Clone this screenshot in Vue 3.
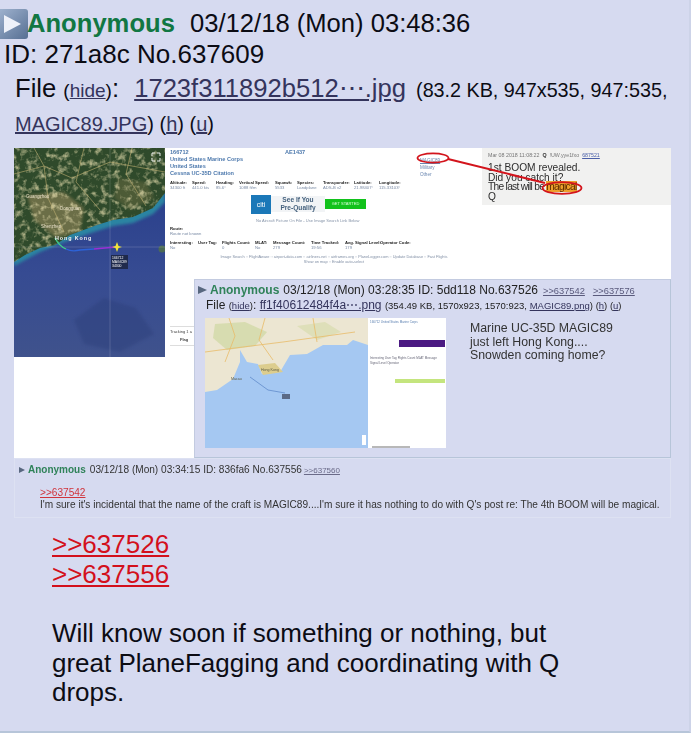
<template>
  <main class="post">
    <div class="line head">
      <svg class="expand" width="28" height="30" viewBox="0 0 28 30">
        <defs>
          <linearGradient id="btn" x1="0" y1="0" x2="1" y2="1">
            <stop offset="0" stop-color="#a3b6d2" />
            <stop offset="1" stop-color="#566f93" />
          </linearGradient>
        </defs>
        <rect x="-5" y="0" width="33" height="30" rx="3" fill="url(#btn)" />
        <path d="M4 6 L21 15 L4 24 Z" fill="#eef1f9" />
      </svg>
      <span class="name">Anonymous</span>
      <span>03/12/18 (Mon) 03:48:36</span>
    </div>
    <div class="line idline">ID: 271a8c No.637609</div>
    <div class="line fileline">
      File <small>(<a>hide</a>)</small>: <a class="fname">1723f311892b512⋯.jpg</a> <small class="meta">(83.2 KB, 947x535, 947:535,</small>
    </div>
    <div class="line magic"><a>MAGIC89.JPG</a>) (<a>h</a>) (<a>u</a>)</div>

    <div class="shot">
      <div class="shot-top">
        <svg class="map" width="151" height="209" viewBox="0 0 151 209">
          <defs>
            <linearGradient id="sea" x1="0" y1="0" x2="0" y2="1">
              <stop offset="0" stop-color="#243a88" />
              <stop offset="0.6" stop-color="#364b92" />
              <stop offset="1" stop-color="#3f528c" />
            </linearGradient>
            <filter id="soft"><feGaussianBlur stdDeviation="1.4" /></filter>
            <filter id="rough">
              <feTurbulence type="fractalNoise" baseFrequency="0.16" numOctaves="3" seed="7" />
              <feColorMatrix values="0 0 0 0 0.78  0 0 0 0 0.72  0 0 0 0 0.42  0 0 0 3 -1.45" />
            </filter>
            <clipPath id="landclip"><path d="M0 114 L11 107 L26 100 L41 97 L56 87 L83 77 L99 72 L119 69 L139 60 L151 45 L151 0 L0 0 Z" /></clipPath>
          </defs>
          <rect width="151" height="209" fill="url(#sea)" />
          <path d="M0 118 L26 104 L56 92 L83 83 L99 78 L119 75 L139 66 L151 54 L151 40 L0 100 Z" fill="#2c84a2" filter="url(#soft)" />
          <path d="M0 114 L11 107 L26 100 L41 97 L56 87 L83 77 L99 72 L119 69 L139 60 L151 45 L151 0 L0 0 Z" fill="#2f4a2b" />
          <path d="M13 47 L50 44 L70 60 L66 84 L42 90 L20 72 Z" fill="#94875a" opacity=".6" filter="url(#soft)" clip-path="url(#landclip)" />
          <path d="M104 30 L132 34 L140 50 L116 62 L100 50 Z" fill="#66693f" opacity=".55" filter="url(#soft)" />
          <g clip-path="url(#landclip)">
            <rect width="151" height="116" filter="url(#rough)" opacity=".7" />
            <path d="M0 26 L30 18 L58 30 L96 14 L151 24 M20 0 L30 18 L34 50 L50 84 M70 0 L62 34 L86 62 M118 0 L112 26 L132 58" stroke="#c9b878" stroke-width=".7" fill="none" opacity=".8" />
          </g>
          <path d="M60 172 L90 150 L122 160 L140 186 L106 204 L70 196 Z" fill="#2c3c78" opacity=".4" filter="url(#soft)" />
          <circle cx="148" cy="101" r="3.5" fill="#4c6a55" />
          <path d="M0 99 H151 M96 0 V209" stroke="#fff" stroke-opacity=".25" stroke-width=".6" />
          <path d="M41 90 Q45 98 52 101" stroke="#3fd08c" stroke-width="1.3" fill="none" />
          <path d="M52 101 Q58 104 66 102 L80 101" stroke="#2d63d8" stroke-width="1.3" fill="none" />
          <path d="M80 101 L102 99" stroke="#9a2fd6" stroke-width="1.3" fill="none" />
          <path d="M103 94 L104.5 98 L108 99 L104.5 100 L103 104 L101.5 100 L98 99 L101.5 98 Z" fill="#f1e53a" />
          <rect x="97" y="107" width="17" height="14" fill="#1c2440" opacity=".85" />
          <text class="m-lab" x="98" y="111">166712</text>
          <text class="m-lab" x="98" y="115">MAGIC89</text>
          <text class="m-lab" x="98" y="119">34300</text>
          <text class="m-city" x="41" y="92">Hong Kong</text>
          <text class="m-tiny" x="12" y="50">Guangzhou</text>
          <text class="m-tiny" x="46" y="62">Dongguan</text>
          <text class="m-tiny" x="27" y="80">Shenzhen</text>
          <path d="M138 8 V5 H141 M143 5 H146 V8 M146 10 V13 H143 M141 13 H138 V10" stroke="#fff" stroke-width=".9" fill="none" />
        </svg>

        <div class="detail">
          <div class="reg-row"><b class="reg">166712</b><b class="hex">AE1437</b></div>
          <b class="reg">United States Marine Corps</b>
          <b class="reg">United States</b>
          <b class="reg">Cessna UC-35D Citation</b>
          <div class="cols c1">
            <div v-for="c in stats1" :key="c[0]" :style="{ width: c[2] + 'px' }"><b>{{ c[0] }}</b><i>{{ c[1] }}</i></div>
          </div>
          <div class="ad">
            <span class="citi">citi</span>
            <b class="qualify">See If You<br />Pre-Qualify</b>
            <span class="go">GET STARTED</span>
          </div>
          <p class="nopic">No Aircraft Picture On File - Use Image Search Link Below</p>
          <div class="route"><b>Route:</b><i>Route not known</i></div>
          <div class="cols c2">
            <div v-for="c in stats2" :key="c[0]" :style="{ width: c[2] + 'px' }"><b>{{ c[0] }}</b><i>{{ c[1] }}</i></div>
          </div>
          <p class="links">Image Search :: FlightAware :: airport-data.com :: airliners.net :: airframes.org :: PlaneLogger.com :: Update Database :: Fast Flights<br />Show on map :: Enable auto-select</p>
          <div class="track">Tracking 1 a<b>Flag</b></div>
        </div>

        <div class="quote">
          <p class="q-meta">Mar 08 2018 11:08:22 &nbsp;<b>Q</b>&nbsp; !UW.yye1fxo &nbsp;<u>687521</u></p>
          <p>1st BOOM revealed.<br />Did you catch it?<br /><span class="tight">The last will be <mark>magical</mark></span><br />Q</p>
        </div>
      </div>

      <!-- side labels and the red marker sit over the screenshot -->
      <div class="side"><u>MAGIC89</u><br />Military<br />Other</div>
      <svg class="marker" width="200" height="60" viewBox="0 0 200 60">
        <ellipse cx="17" cy="6" rx="15.5" ry="4.6" fill="none" stroke="#d3141c" stroke-width="1.8" />
        <ellipse cx="146" cy="36" rx="19.5" ry="5.8" fill="none" stroke="#d3141c" stroke-width="1.8" />
        <path d="M32 7 L129 31" stroke="#d3141c" stroke-width="2" />
      </svg>

      <!-- pasted reply, laid over the lower right of the picture -->
      <section class="inner">
        <div class="i-head">
          <span class="tri"></span><b class="i-name">Anonymous</b>
          <span>03/12/18 (Mon) 03:28:35 ID: 5dd118 No.637526</span>
          <a class="i-ref">&gt;&gt;637542</a><a class="i-ref second">&gt;&gt;637576</a>
        </div>
        <div class="i-file">File <small>(<a>hide</a>)</small>: <a>ff1f40612484f4a⋯.png</a> <small>(354.49 KB, 1570x923, 1570:923, <a>MAGIC89.png</a>) (<a>h</a>) (<a>u</a>)</small></div>
        <div class="i-body">
          <svg class="i-map" width="163" height="130" viewBox="0 0 163 130">
            <rect width="163" height="130" fill="#a5c8f2" />
            <path d="M0 74 L12 72 L28 61 L35 44 L35 32 L42 44 L53 46 L57 56 L75 54 L85 37 L102 36 L118 27 L142 27 L148 22 L163 27 L163 0 L0 0 Z" fill="#ece6d2" />
            <path d="M10 6 L40 4 L62 14 L50 28 L22 32 L8 20 Z" fill="#d0d8a4" opacity=".75" />
            <path d="M92 8 L120 4 L136 14 L112 22 Z" fill="#d8dcae" opacity=".7" />
            <path d="M53 47 L70 45 L78 54 L58 57 Z" fill="#dccd8e" />
            <path d="M24 0 L30 18 L20 44 M60 0 L54 22 L68 42 M108 0 L112 24 M0 34 L30 30 L78 24 L150 14" stroke="#e8bb68" stroke-width=".8" fill="none" />
            <path d="M45 59 L63 72 L80 75" stroke="#4a77bd" stroke-width=".6" fill="none" />
            <rect x="77" y="76" width="8" height="5" fill="#5b6a86" />
            <text class="im-lab" x="56" y="53">Hong Kong</text>
            <text class="im-lab" x="26" y="62">Macau</text>
            <rect x="157" y="117" width="4" height="10" fill="#fff" />
          </svg>
          <div class="i-info">
            <span class="i-top">166712 United States Marine Corps</span>
            <span class="i-ban"></span>
            <span class="i-row">Interesting User Tag Flights Count MLAT Message</span>
            <span class="i-row two">Signal Level Operator</span>
            <span class="i-green"></span>
            <span class="i-scroll"></span>
          </div>
          <p class="i-text">Marine UC-35D MAGIC89<br />just left Hong Kong....<br />Snowden coming home?</p>
        </div>
      </section>

      <section class="reply">
        <div class="r-head">
          <span class="tri small"></span><b class="i-name">Anonymous</b>
          <span>03/12/18 (Mon) 03:34:15 ID: 836fa6 No.637556</span>
          <a class="r-ref">&gt;&gt;637560</a>
        </div>
        <a class="r-quote">&gt;&gt;637542</a>
        <p>I'm sure it's incidental that the name of the craft is MAGIC89....I'm sure it has nothing to do with Q's post re: The 4th BOOM will be magical.</p>
      </section>
    </div>

    <div class="message">
      <a class="line2 red"><span>&gt;&gt;637526</span></a>
      <a class="line2 red"><span>&gt;&gt;637556</span></a>
      <div class="line2"></div>
      <div class="line2">Will know soon if something or nothing, but</div>
      <div class="line2">great PlaneFagging and coordinating with Q</div>
      <div class="line2">drops.</div>
    </div>
  </main>
</template>

<script setup>
const stats1 = [
  ['Altitude:', '34300 ft', 22],
  ['Speed:', '441.0 kts', 24],
  ['Heading:', '85.6°', 23],
  ['Vertical Speed:', '1088 ft/m', 36],
  ['Squawk:', '5533', 22],
  ['Species:', 'Landplane', 26],
  ['Transponder:', 'ADS-B v2', 31],
  ['Latitude:', '21.98407°', 25],
  ['Longitude:', '115.33103°', 30]
]
const stats2 = [
  ['Interesting:', 'No', 28],
  ['User Tag:', '', 24],
  ['Flights Count:', '0', 33],
  ['MLAT:', 'No', 18],
  ['Message Count:', '279', 38],
  ['Time Tracked:', '19:56', 34],
  ['Avg. Signal Level:', '179', 35],
  ['Operator Code:', '', 40]
]
</script>

<style>
html, body { margin: 0; background: #d6daf0; }
</style>

<style scoped>
.post {
  box-sizing: border-box;
  width: 691px;
  height: 733px;
  overflow: hidden;
  background: #d6daf0;
  border-bottom: 2px solid #b7c5d9;
  border-right: 2px solid #cdd3e8;
  font-family: "Liberation Sans", Arial, sans-serif;
  color: #0c0c14;
}
.line { white-space: nowrap; }
.line a { color: #34345c; text-decoration: underline; }
.head {
  display: flex;
  align-items: center;
  height: 30px;
  padding-top: 8px;
  font-size: 25.6px;
}
.expand { flex: none; margin: 2px -1px 0 0; }
.name { flex: none; width: 163px; color: #117743; font-weight: 700; }
.idline { height: 32px; line-height: 32px; padding-left: 4px; font-size: 26px; }
.fileline { height: 37px; line-height: 37px; padding-left: 15px; font-size: 25.6px; }
.fileline small { font-size: 19px; }
.fileline .fname { margin-left: 8px; }
.fileline small.meta { margin-left: 3px; font-size: 19.8px; letter-spacing: -.02px; }
.magic { height: 34px; line-height: 34px; padding-left: 15px; font-size: 20px; }
.shot {
  position: relative;
  width: 657px;
  height: 370px;
  margin: 7px 0 0 14px;
  background: #fff;
  filter: blur(0.35px);
  overflow: hidden;
}
.shot-top { display: flex; height: 310px; }
.map { flex: none; }
.m-lab { font-size: 3.4px; fill: #fff; }
.m-city { font-size: 5.4px; font-weight: 700; fill: #f2f2f2; letter-spacing: .9px; }
.m-tiny { font-size: 4.5px; fill: #e8e0c8; }
.detail {
  flex: none;
  box-sizing: border-box;
  width: 317px;
  height: 310px;
  padding: 1px 0 0 5px;
  font-size: 5.6px;
  line-height: 7px;
  color: #6c7b93;
  overflow: hidden;
}
.detail > b { display: block; }
.reg { color: #4d79ad; }
.reg-row { display: flex; }
.reg-row .reg { width: 115px; }
.hex { color: #4d79ad; }
.cols { display: flex; line-height: 4.5px; font-size: 4.2px; white-space: nowrap; }
.cols b, .route b { display: block; color: #222; }
.cols i, .route i { display: block; font-style: normal; color: #7a8ba5; }
.c1 { margin-top: 4px; }
.ad { display: flex; align-items: center; height: 20px; margin: 4px 0 0 81px; }
.citi {
  width: 20px;
  height: 19px;
  background: #1b78b8;
  color: #fff;
  font-size: 7px;
  line-height: 19px;
  text-align: center;
}
.qualify {
  width: 54px;
  text-align: center;
  color: #46627e;
  font-size: 6.6px;
  line-height: 7.6px;
  background: #f2f4f6;
}
.go {
  width: 41px;
  height: 10px;
  background: #12c21c;
  color: #d9ffd9;
  font-size: 4px;
  line-height: 10px;
  text-align: center;
}
.nopic { margin: 4px 0 0 86px; font-size: 4px; line-height: 5px; color: #8593a8; }
.route { margin-top: 3px; font-size: 4.2px; line-height: 5px; }
.c2 { margin-top: 5px; }
.links { margin: 4px 0 0 14px; width: 300px; font-size: 3.9px; line-height: 5px; color: #8290a6; text-align: center; white-space: nowrap; }
.track {
  width: 28px;
  margin-top: 62px;
  padding: 2px 0 3px;
  border-top: 1px solid #ddd;
  border-bottom: 1px solid #ddd;
  font-size: 4px;
  line-height: 5px;
  color: #444;
  white-space: nowrap;
}
.track b { display: block; margin: 3px 0 0 10px; }
.quote {
  flex: none;
  box-sizing: border-box;
  width: 189px;
  height: 57px;
  padding: 4px 0 0 6px;
  background: #f1f1f0;
  color: #2c2c2c;
  font-size: 10.2px;
  line-height: 9.6px;
}
.quote p { margin: 0; }
.quote .q-meta { margin-bottom: 5px; font-size: 5.3px; line-height: 6px; color: #777; }
.quote .q-meta b { color: #333; }
.quote .q-meta u { color: #4a5fa8; }
.quote mark { background: #eea02c; color: #5b2b00; }
.tight { letter-spacing: -.7px; }
.side {
  position: absolute;
  left: 406px;
  top: 9px;
  font-size: 4.6px;
  line-height: 7px;
  color: #6a86b0;
}
.marker { position: absolute; left: 402px; top: 4px; }
.inner {
  position: absolute;
  left: 180px;
  top: 131px;
  box-sizing: border-box;
  width: 477px;
  height: 179px;
  padding: 3px 0 0 3px;
  background: #d6daf0;
  border: 1px solid #c3cbe0;
  border-right-color: #b7c5d9;
  border-bottom-color: #b7c5d9;
  color: #222;
  white-space: nowrap;
}
.inner a, .reply a { color: #34345c; text-decoration: underline; }
.tri {
  display: inline-block;
  width: 0;
  height: 0;
  margin-right: 3px;
  border-left: 9px solid #58677f;
  border-top: 4px solid transparent;
  border-bottom: 4px solid transparent;
}
.tri.small { border-left-width: 6px; border-top-width: 3px; border-bottom-width: 3px; margin-right: 3px; }
.i-head { height: 14px; font-size: 12px; line-height: 14px; }
.i-name { margin-right: 4px; color: #2f8259; }
.i-ref { margin-left: 5px; font-size: 9.3px; color: #5a5a7c !important; }
.i-ref.second { margin-left: 8px; }
.i-file { height: 15px; margin: 1px 0 0 8px; font-size: 12px; line-height: 15px; }
.i-file small { font-size: 9.5px; }
.i-body { display: flex; margin: 0 0 0 7px; }
.i-map { flex: none; margin-top: 5px; }
.im-lab { font-size: 3.6px; fill: #5a5a44; }
.i-info {
  position: relative;
  flex: none;
  width: 78px;
  height: 130px;
  margin-top: 5px;
  background: #fff;
  overflow: hidden;
  font-size: 3px;
  line-height: 4px;
  color: #667;
}
.i-info span { position: absolute; white-space: nowrap; }
.i-top { left: 2px; top: 2px; color: #5a7fb0; }
.i-ban { left: 31px; top: 22px; width: 46px; height: 7px; background: #4b1a82; }
.i-row { left: 2px; top: 38px; }
.i-row.two { top: 43px; }
.i-green { left: 27px; top: 61px; width: 50px; height: 4px; background: #c4e57e; }
.i-scroll { left: 4px; bottom: 0; width: 38px; height: 2px; background: #b8b8b8; }
.i-text { margin: 9px 0 0 24px; font-size: 12.3px; line-height: 13.5px; color: #333; }
.reply {
  position: absolute;
  left: 0;
  top: 310px;
  box-sizing: border-box;
  width: 657px;
  height: 60px;
  padding: 4px 0 0 4px;
  background: #d6daf0;
  border: 1px solid #dde1f2;
  color: #333;
  font-size: 10.1px;
  line-height: 11px;
  white-space: nowrap;
}
.r-head { height: 14px; line-height: 14px; }
.reply .i-name { margin-right: 4px; font-size: 10px; }
.r-ref { margin-left: 2px; font-size: 8px; color: #6a6a88 !important; }
.reply .r-quote { display: block; margin: 10px 0 0 21px; color: #d0343c; }
.reply p { margin: 1px 0 0 21px; }
.message {
  margin-top: 12px;
  padding-left: 52px;
  font-size: 26px;
}
.line2 { display: block; height: 29.7px; line-height: 29.7px; white-space: nowrap; }
.red { color: #d3101c; }
.red span { text-decoration: underline; }
</style>
